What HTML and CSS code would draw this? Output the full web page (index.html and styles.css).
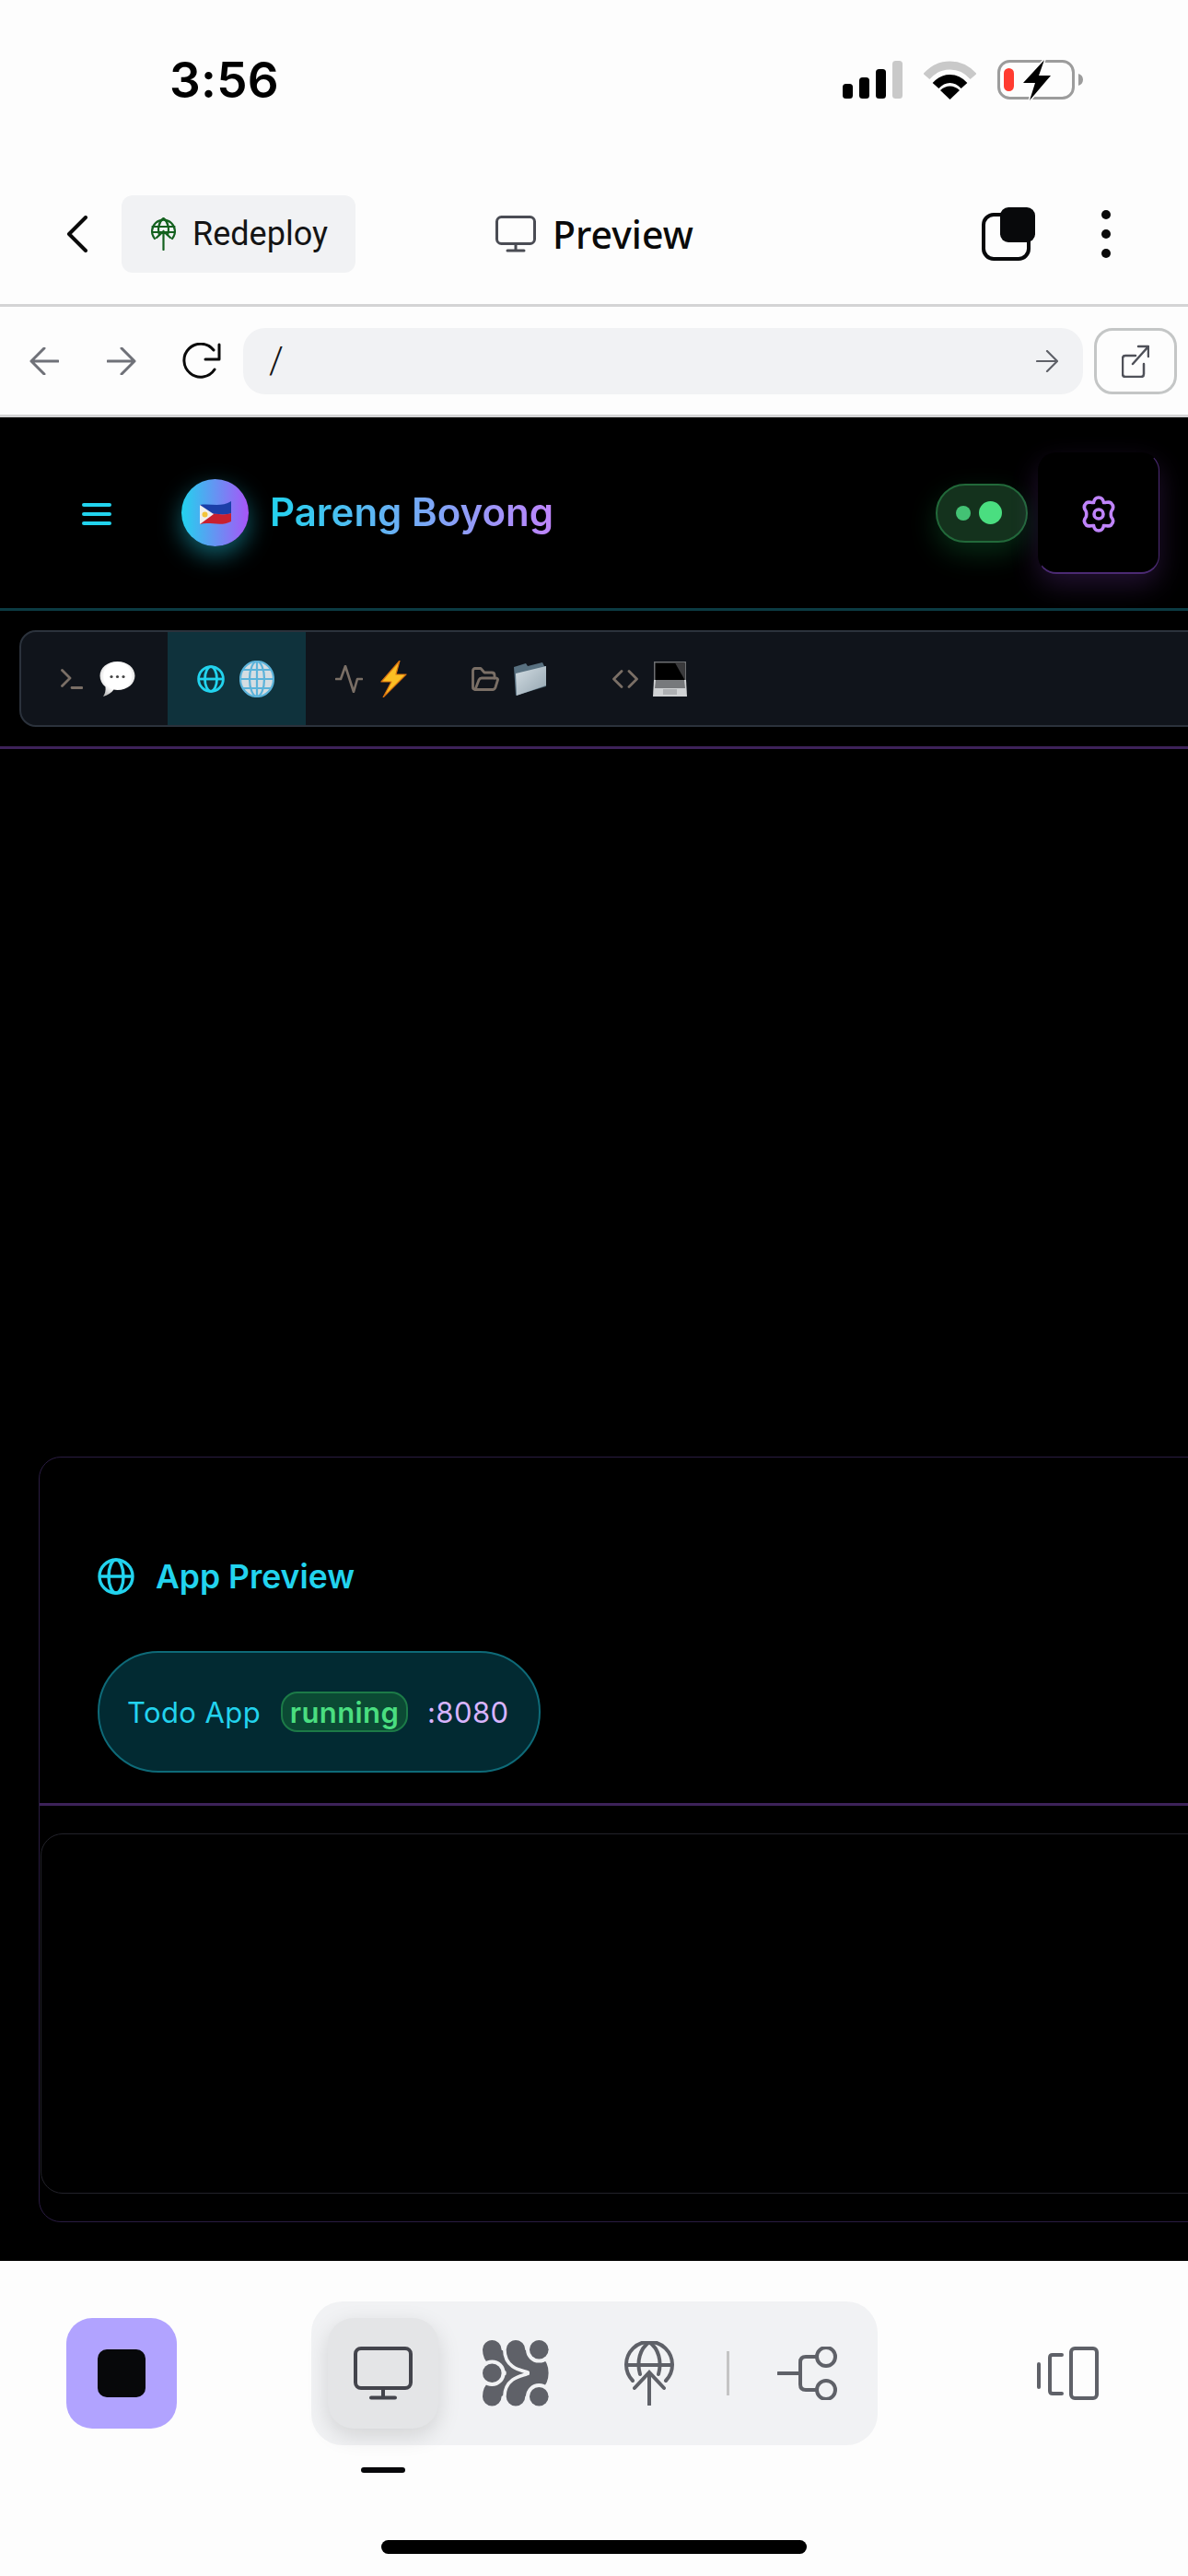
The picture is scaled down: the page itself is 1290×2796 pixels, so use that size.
FILE: index.html
```html
<!DOCTYPE html>
<html lang="en">
<head>
<meta charset="utf-8">
<title>Preview</title>
<link rel="stylesheet" href="styles.css">
</head>
<body>
<div class="phone">
  <header class="status">
    <span class="time">3:56</span>
    <div class="status-icons">
      <svg class="sig" width="65" height="41" viewBox="0 0 65 41"><rect x="0" y="25" width="11" height="16" rx="3.5" fill="#000"/><rect x="18" y="18" width="11" height="23" rx="3.5" fill="#000"/><rect x="36" y="9" width="11" height="32" rx="3.5" fill="#000"/><rect x="54" y="0" width="11" height="41" rx="3.5" fill="#c9c9c9"/></svg>
      <svg class="wifi" width="57" height="43" viewBox="0 0 57 43" fill="none"><path d="M3 18 C17 2 40 2 54 18" stroke="#c9c9c9" stroke-width="9"/><path d="M13 28 C22 18 35 18 44 28" stroke="#000" stroke-width="9"/><path d="M18 33 L28.5 43 L39 33 C33 27 24 27 18 33Z" fill="#000"/></svg>
      <svg class="batt" width="94" height="46" viewBox="0 0 94 46" fill="none"><rect x="1.5" y="2.5" width="81" height="40" rx="12" stroke="#9c9c9c" stroke-width="3"/><path d="M88 16 C91 17 93 19 93 22.500 C93 26 91 28 88 29Z" fill="#9c9c9c"/><rect x="7" y="10" width="11" height="25" rx="5.500" fill="#ff3b30"/><path d="M51 1 L28 26 L41 26 L35 45 L58 18 L45 18Z" fill="#000" stroke="#fdfdfd" stroke-width="3" paint-order="stroke" stroke-linejoin="round"/></svg>
    </div>
  </header>

  <nav class="toolbar">
    <svg class="chev" width="23" height="40" viewBox="0 0 23 40" fill="none"><path d="M21 2 L3 20 L21 38" stroke="#0a0a0a" stroke-width="4" stroke-linecap="round" stroke-linejoin="round"/></svg>
    <button class="redeploy">
      <svg width="27" height="36" viewBox="0 0 27 36" fill="none" stroke="#14611f" stroke-width="2.200" stroke-linecap="round"><path d="M4 23 A12.400 12.400 0 1 1 23 23"/><path d="M1.500 10 H25.500 M1.500 16 H25.500"/><path d="M13.500 1 C8 5 7 13 9 19 M13.500 1 C19 5 20 13 18 19"/><path d="M13.500 35 V15 M6 22 L13.500 15 L21 22"/></svg>
      <span>Redeploy</span>
    </button>
    <div class="title">
      <svg width="44" height="40" viewBox="0 0 44 40" fill="none" stroke="#4a4c54" stroke-width="3" stroke-linecap="round"><rect x="1.500" y="1.500" width="41" height="29" rx="5"/><path d="M22 31 V38 M13 38 H31"/></svg>
      <span>Preview</span>
    </div>
    <div class="tool-right">
      <svg width="58" height="58" viewBox="0 0 58 58" fill="none"><rect x="2" y="8" width="49" height="48" rx="11" stroke="#08090b" stroke-width="4"/><rect x="20" y="0" width="38" height="38" rx="9" fill="#08090b"/></svg>
      <div class="dots"><i></i><i></i><i></i></div>
    </div>
  </nav>

  <div class="urlbar">
    <svg class="nav-back" width="32" height="30" viewBox="0 0 32 30" fill="none" stroke="#6f7178" stroke-width="3" stroke-linecap="round" stroke-linejoin="round"><path d="M31 15 H2 M16 1 L2 15 L16 29"/></svg>
    <svg class="nav-fwd" width="32" height="30" viewBox="0 0 32 30" fill="none" stroke="#6f7178" stroke-width="3" stroke-linecap="round" stroke-linejoin="round"><path d="M1 15 H30 M16 1 L30 15 L16 29"/></svg>
    <svg class="nav-reload" width="44" height="40" viewBox="0 0 44 40" fill="none" stroke="#0a0a0a" stroke-width="3" stroke-linecap="round" stroke-linejoin="round"><path d="M37 29 A18 18 0 1 1 36 8"/><path d="M42 2 V18 H27"/></svg>
    <div class="addr">
      <span>/</span>
      <svg width="24" height="24" viewBox="0 0 24 24" fill="none" stroke="#5f6168" stroke-width="2.200" stroke-linecap="round" stroke-linejoin="round"><path d="M1 12 H23 M12 1 L23 12 L12 23"/></svg>
    </div>
    <button class="open">
      <svg width="30" height="36" viewBox="0 0 30 36" fill="none" stroke="#4f5159" stroke-width="2.500" stroke-linecap="round" stroke-linejoin="round"><path d="M15 12 H4 Q1 12 1 15 V32 Q1 35 4 35 H21 Q24 35 24 32 V21"/><path d="M12 21 L29 2 M18 2 H29 V13"/></svg>
    </button>
  </div>

  <main class="app">
    <section class="app-head">
      <div class="burger"><i></i><i></i><i></i></div>
      <div class="logo">
        <svg width="36" height="26" viewBox="0 0 36 26"><path d="M1 4 C12 2 24 7 35 0 V13 C24 17 12 11 1 14Z" fill="#1b3fa8"/><path d="M1 14 C12 11 24 17 35 13 V22 C24 28 12 22 1 25Z" fill="#c8202f"/><path d="M1 4 L16 14 L1 25Z" fill="#efefef"/><circle cx="6.500" cy="14.500" r="3" fill="#f2c43a"/></svg>
      </div>
      <h1 class="brand">Pareng Boyong</h1>
      <div class="conn"><i class="d1"></i><i class="d2"></i></div>
      <div class="gear">
        <svg class="gear-icon" width="38" height="40" viewBox="0 0 38 40" fill="none" stroke="#c084fc" stroke-width="3.600"><path d="M19 2 C23 2 24 5 24.500 7.500 C27 8 30 6 32.500 8 C35.500 11 35 14 33 16.500 C32 18 32 22 33 23.500 C35 26 35.500 29 32.500 32 C30 34 27 32 24.500 32.500 C24 35 23 38 19 38 C15 38 14 35 13.500 32.500 C11 32 8 34 5.500 32 C2.500 29 3 26 5 23.500 C6 22 6 18 5 16.500 C3 14 2.500 11 5.500 8 C8 6 11 8 13.500 7.500 C14 5 15 2 19 2Z"/><circle cx="19" cy="20" r="5"/></svg>
      </div>
    </section>

    <div class="tabs-wrap">
      <div class="tabs">
        <div class="tab t1">
          <svg width="24" height="22" viewBox="0 0 24 22" fill="none" stroke="#7a6f66" stroke-width="2.800" stroke-linecap="round" stroke-linejoin="round"><path d="M1.500 1.500 L10 10 L1.500 18.500 M12 20.500 H23"/></svg>
          <svg class="emo" width="39" height="38" viewBox="0 0 39 38"><defs><radialGradient id="bub" cx=".5" cy=".42" r=".62"><stop offset=".62" stop-color="#fff"/><stop offset="1" stop-color="#bdbdbd"/></radialGradient></defs><path d="M19.500 0 C30.500 0 38.500 7 38.500 15.500 C38.500 24 30.500 31 19.500 31 C18 31 16.500 30.800 15.500 30.600 C13 34 9 37 4 38 C6 35.500 7 31.500 6.500 27.500 C2.500 24.500 .5 20 .5 15.500 C.5 7 8.500 0 19.500 0Z" fill="url(#bub)"/><circle cx="13" cy="16.500" r="1.600" fill="#444"/><circle cx="19.500" cy="16.500" r="1.600" fill="#444"/><circle cx="26" cy="16.500" r="1.600" fill="#444"/></svg>
        </div>
        <div class="tab t2 active">
          <svg width="30" height="30" viewBox="0 0 30 30" fill="none" stroke="#22d3ee" stroke-width="2.800"><circle cx="15" cy="15" r="13.400"/><ellipse cx="15" cy="15" rx="6.500" ry="13.400"/><path d="M1.500 15 H28.500"/></svg>
          <svg class="emo" width="38" height="40" viewBox="0 0 38 40" fill="none"><ellipse cx="19" cy="20" rx="18" ry="19" fill="#d5dde2"/><g stroke="#5cb3da" stroke-width="2.200"><ellipse cx="19" cy="20" rx="18" ry="19"/><ellipse cx="19" cy="20" rx="8" ry="19"/><path d="M19 1 V39 M1 20 H37 M4 10 H34 M4 30 H34"/></g></svg>
        </div>
        <div class="tab t3">
          <svg width="30" height="30" viewBox="0 0 30 30" fill="none" stroke="#7a6f66" stroke-width="2.600" stroke-linecap="round" stroke-linejoin="round"><path d="M1 15 H6 L11 1 L20 29 L24 15 H29"/></svg>
          <svg class="emo" width="29" height="40" viewBox="0 0 29 40"><path d="M21 0 L1 23 L12 23 L3 40 L28 15 L17 15Z" fill="#fbbf24" stroke="#d9720f" stroke-width="1.200" stroke-linejoin="round"/></svg>
        </div>
        <div class="tab t4">
          <svg width="30" height="26" viewBox="0 0 30 26" fill="none" stroke="#7a6f66" stroke-width="2.800" stroke-linecap="round" stroke-linejoin="round"><path d="M4 24.500 Q1.500 24.500 1.500 22 V4 Q1.500 1.500 4 1.500 H10 L14 6 H22 Q25 6 25 9 V12"/><path d="M4 24.500 L8 14 Q9 12 11 12 H26 Q29 12 28.500 14 L26 22 Q25 24.500 23 24.500Z"/></svg>
          <svg class="emo" width="36" height="36" viewBox="0 0 36 36"><defs><linearGradient id="fold" x1="0" y1="0" x2="1" y2="1"><stop offset="0" stop-color="#d3dde3"/><stop offset="1" stop-color="#93a4af"/></linearGradient></defs><path d="M0 5 L13 1 L15 4 L31 0 L33 4 L35 4 V26 L2 36Z" fill="#587080"/><path d="M2 12 L35 4 V25 L3 36Z" fill="url(#fold)"/></svg>
        </div>
        <div class="tab t5">
          <svg width="28" height="20" viewBox="0 0 28 20" fill="none" stroke="#7a6f66" stroke-width="2.800" stroke-linecap="round" stroke-linejoin="round"><path d="M10 1.500 L1.500 10 L10 18.500 M18 1.500 L26.500 10 L18 18.500"/></svg>
          <svg class="emo" width="37" height="38" viewBox="0 0 37 38"><path d="M1 0 H36 V20 H1Z" fill="#6d6f72"/><path d="M2.500 1.500 H34.500 V20 H2.500Z" fill="#000"/><path d="M24 1.500 H34.500 V20Z" fill="#3a3a3c"/><path d="M1 20 H36 L37 38 H0Z" fill="#d0d2d4"/><path d="M3 20 H34 L35 29 H2Z" fill="#77797c"/><path d="M11 30 H26 V36 H11Z" fill="#aeb0b3"/></svg>
        </div>
      </div>
    </div>

    <section class="body">
      <div class="card">
        <div class="card-head">
          <div class="card-title">
            <svg width="40" height="40" viewBox="0 0 40 40" fill="none" stroke="#22d3ee" stroke-width="3.400"><circle cx="20" cy="20" r="18"/><ellipse cx="20" cy="20" rx="8" ry="18"/><path d="M2 20 H38"/></svg>
            <h2>App Preview</h2>
          </div>
          <div class="app-pill">
            <span class="app-name">Todo App</span>
            <span class="badge">running</span>
            <span class="port">:8080</span>
          </div>
        </div>
        <div class="inner"></div>
      </div>
    </section>
  </main>

  <footer class="bottom">
    <div class="dock">
      <button class="stop"><i></i></button>
      <div class="group">
        <div class="g-item active-g">
          <svg width="64" height="58" viewBox="0 0 64 58" fill="none" stroke="#43444c" stroke-width="4" stroke-linecap="round"><rect x="2" y="2" width="60" height="43" rx="6"/><path d="M32 46 V55 M19 55.500 H45"/></svg>
        </div>
        <div class="g-item net">
          <svg width="72" height="72" viewBox="0 0 72 72" fill="none" stroke-linecap="round">
            <path d="M10.300 10.300 C10.300 28 36 16 36 35.700 C36 55 10.300 44 10.300 61.300" stroke="#5f6168" stroke-width="20.600"/>
            <path d="M36 10.300 C36 28 61.300 16 61.300 35.700 C61.300 55 36 44 36 61.300" stroke="#f1f2f4" stroke-width="28"/>
            <path d="M36 10.300 C36 28 61.300 16 61.300 35.700 C61.300 55 36 44 36 61.300" stroke="#5f6168" stroke-width="20.600"/>
            <g fill="#5f6168" stroke="#f1f2f4" stroke-width="8" paint-order="stroke"><circle cx="10.300" cy="35.700" r="10.300"/><circle cx="61.300" cy="10.300" r="10.300"/><circle cx="61.300" cy="61.300" r="10.300"/></g>
          </svg>
        </div>
        <div class="g-item up">
          <svg width="54" height="70" viewBox="0 0 54 70" fill="none" stroke="#5f6168" stroke-width="4" stroke-linecap="round"><path d="M9 43 A25 25 0 1 1 45 43"/><path d="M3 26 H51"/><path d="M27 1 C17 8 13 22 17 36 M27 1 C37 8 41 22 37 36"/><path d="M27 69 V34 M11 51 L27 34 L43 51"/></svg>
        </div>
        <i class="sep"></i>
        <div class="g-item fork">
          <svg width="65" height="58" viewBox="0 0 65 58" fill="none" stroke="#5f6168" stroke-width="4" stroke-linecap="round"><circle cx="53" cy="11" r="10"/><circle cx="53" cy="47" r="10"/><path d="M1 29 H25"/><path d="M43 11 H31 Q25 11 25 17 V41 Q25 47 31 47 H43"/></svg>
        </div>
      </div>
      <svg class="side" width="67" height="58" viewBox="0 0 67 58" fill="none" stroke="#5f6168" stroke-width="4" stroke-linecap="round" stroke-linejoin="round"><path d="M2 19 V44"/><path d="M27 9 H17 Q14 9 14 12 V48 Q14 51 17 51 H27"/><rect x="37" y="2" width="28" height="54" rx="4"/></svg>
    </div>
    <i class="under"></i>
    <i class="home"></i>
  </footer>
</div>
</body>
</html>
```

FILE: styles.css
```css
* { box-sizing: border-box; }
html, body { margin: 0; padding: 0; background: #fdfdfd; }
i { display: block; }
button { border: 0; padding: 0; font: inherit; }
svg { display: block; flex: none; }
.phone { width: 1290px; height: 2796px; overflow: hidden; display: flex; flex-direction: column; background: #fdfdfd; color: #0a0a0a; font-family: Inter, "Liberation Sans", sans-serif; }

.status { height: 178px; flex: none; display: flex; justify-content: space-between; padding: 64px 113px 0 184px; }
.time { font-size: 53px; line-height: 46px; font-weight: 600; color: #000; letter-spacing: .3px; }
.status-icons { display: flex; align-items: flex-start; }
.sig { margin-top: 2px; margin-right: 23px; }
.wifi { margin-top: 1px; margin-right: 23px; }

.toolbar { height: 155px; flex: none; display: flex; align-items: center; padding: 0 84px 0 72px; border-bottom: 3px solid #d4d4d5; }
.redeploy { margin-left: 37px; width: 254px; height: 84px; background: #f1f2f4; border-radius: 12px; display: flex; align-items: center; gap: 18px; padding-left: 32px; font-family: Roboto, sans-serif; font-size: 36px; color: #141414; }
.title { margin-left: 152px; display: flex; align-items: center; gap: 18px; font-family: "Noto Sans", sans-serif; font-weight: 500; font-size: 41px; color: #0a0a0a; }
.tool-right { margin-left: auto; display: flex; align-items: center; gap: 72px; }
.dots { display: flex; flex-direction: column; gap: 11px; }
.dots i { width: 10px; height: 10px; border-radius: 50%; background: #0a0a0a; }

.urlbar { height: 120px; flex: none; display: flex; align-items: center; padding: 0 12px 0 32px; border-bottom: 3px solid #d4d4d5; }
.nav-fwd { margin-left: 52px; }
.nav-reload { margin-left: 48px; }
.addr { margin-left: 24px; width: 913px; height: 72px; border-radius: 24px; background: #f1f2f4; display: flex; align-items: center; justify-content: space-between; padding: 0 27px 0 28px; font-family: Roboto, sans-serif; font-weight: 300; font-size: 40px; color: #141414; }
.open { margin-left: 12px; width: 90px; height: 72px; border: 3px solid #c4c6c6; border-radius: 20px; background: #fdfdfd; display: flex; align-items: center; justify-content: center; }

.app { flex: 1; background: #000; display: flex; flex-direction: column; min-height: 0; }
.app-head { height: 210px; flex: none; display: flex; align-items: center; padding: 0 31px 0 89px; border-bottom: 3px solid #0c3b43; }
.burger { display: flex; flex-direction: column; gap: 6px; width: 32px; margin-top: 3px; }
.burger i { height: 4px; border-radius: 2px; background: #22d3ee; }
.logo { margin-left: 76px; width: 73px; height: 73px; border-radius: 50%; background: linear-gradient(90deg, #22d3ee, #a855f7); box-shadow: 0 10px 26px rgba(34, 211, 238, .45); display: flex; align-items: center; justify-content: center; }
.brand { margin: 0 0 0 23px; font-size: 42px; line-height: 1.2; font-weight: 600; background: linear-gradient(90deg, #22d3ee, #c084fc); -webkit-background-clip: text; background-clip: text; color: transparent; }
.conn { margin-left: auto; width: 100px; height: 64px; border: 2px solid #22693a; border-radius: 32px; background: #14321d; box-shadow: 0 12px 30px rgba(34, 197, 94, .22); display: flex; align-items: center; gap: 9px; padding-left: 20px; }
.conn .d1 { width: 16px; height: 16px; border-radius: 50%; background: #43c274; }
.conn .d2 { width: 25px; height: 25px; border-radius: 50%; background: #4ade80; }
.gear { margin-left: 11px; width: 132px; height: 132px; border: 1px solid transparent; border-bottom: 2px solid #4b2a73; border-right: 1px solid #4b2a73; border-radius: 20px; background: #000; box-shadow: 0 12px 30px rgba(168, 85, 247, .2); display: flex; align-items: center; justify-content: center; }
.gear-icon { margin-top: 3px; }

.tabs-wrap { height: 150px; flex: none; padding: 21px 0 0 21px; border-bottom: 3px solid #3d2259; }
.tabs { width: 1400px; height: 105px; display: flex; background: #10141b; border: 2px solid #2b323c; border-radius: 18px 0 0 18px; }
.tab { display: flex; align-items: center; gap: 18px; height: 100%; flex: none; }
.t1 { width: 159px; padding-left: 43px; }
.t2 { width: 150px; padding-left: 32px; gap: 16px; background: #0f323c; }
.t3 { width: 170px; padding-left: 32px; gap: 19px; }
.t4 { width: 150px; padding-left: 10px; gap: 16px; }
.t5 { width: 200px; padding-left: 13px; gap: 16px; }

.body { flex: 1; min-height: 0; padding: 768px 0 0 42px; }
.card { width: 1400px; height: 831px; border: 1px solid #2a1c42; border-radius: 24px; display: flex; flex-direction: column; }
.card-head { height: 378px; flex: none; padding: 108px 0 0 63px; border-bottom: 3px solid #3d2259; }
.card-title { display: flex; align-items: center; gap: 23px; height: 42px; }
.card-title h2 { margin: 0; font-size: 35.5px; font-weight: 600; color: #22d3ee; }
.app-pill { margin-top: 60px; width: 481px; height: 132px; border: 2px solid #0e6a78; border-radius: 66px; background: #022a32; display: flex; align-items: center; padding-left: 30px; font-size: 31px; letter-spacing: .4px; }
.app-name { color: #22d3ee; }
.badge { margin-left: 22px; height: 44px; width: 138px; border: 2px solid #1c7a47; border-radius: 18px; background: #0b4a34; color: #4ade80; font-weight: 600; display: flex; align-items: center; justify-content: center; }
.port { margin-left: 21px; color: #d8b4fe; }
.inner { margin: 30px 0 0 1px; height: 391px; border: 1px solid #22222a; border-radius: 24px; }

.bottom { height: 342px; flex: none; display: flex; flex-direction: column; align-items: flex-start; padding-top: 44px; }
.dock { display: flex; align-items: center; padding-left: 72px; }
.stop { width: 120px; height: 120px; border-radius: 28px; background: #b1a3ff; display: flex; align-items: center; justify-content: center; }
.stop i { width: 52px; height: 52px; border-radius: 10px; background: #07080a; }
.group { margin-left: 146px; width: 615px; height: 156px; border-radius: 34px; background: #f1f2f4; display: flex; align-items: center; padding-left: 18px; }
.g-item { display: flex; align-items: center; justify-content: center; flex: none; }
.active-g { width: 120px; height: 120px; border-radius: 28px; background: #e4e5e7; box-shadow: 0 8px 24px rgba(0, 0, 0, .13); }
.net { margin-left: 48px; }
.up { margin-left: 82px; }
.sep { margin-left: 57px; width: 3px; height: 48px; background: #c4c4c4; }
.fork { margin-left: 52px; }
.side { margin-left: 173px; }
.under { width: 48px; height: 6px; border-radius: 3px; background: #07080a; margin: 24px 0 0 392px; }
.home { width: 462px; height: 15px; border-radius: 8px; background: #000; margin: 73px 0 0 414px; }
```
